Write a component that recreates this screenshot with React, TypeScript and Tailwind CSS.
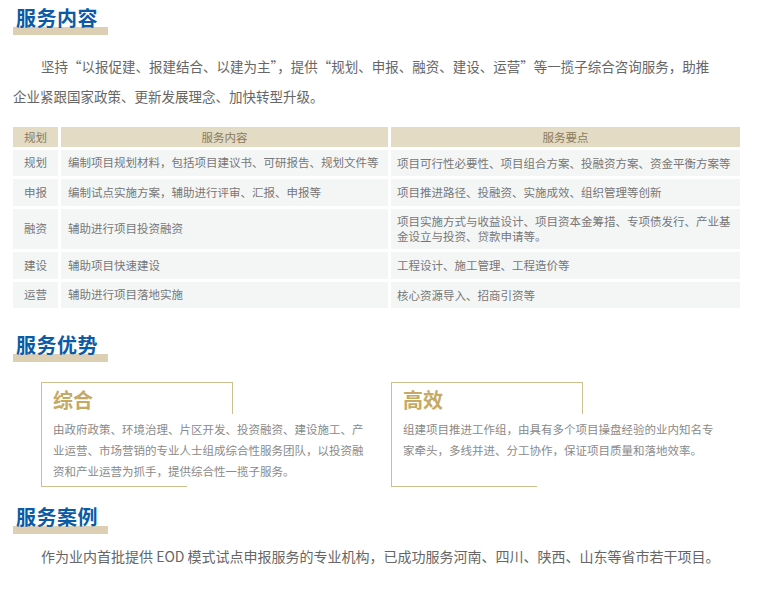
export default function App() {
  const font = { fontFamily: '"Noto Sans CJK SC", "Noto Sans", sans-serif' };
  const H = ({ t }: { t: string }) => (
    <div className="relative ml-[13px] w-[95px] h-[30px]">
      <div className="absolute left-0 right-0 top-[21px] h-[8px] bg-[#dccfb3]" />
      <div className="absolute left-[3px] top-[-3px] text-[20px] leading-[30px] font-bold text-[#0b5aa5] tracking-[0.5px]">{t}</div>
    </div>
  );
  const rows = [
    ["规划", "编制项目规划材料，包括项目建议书、可研报告、规划文件等", "项目可行性必要性、项目组合方案、投融资方案、资金平衡方案等", 26],
    ["申报", "编制试点实施方案，辅助进行评审、汇报、申报等", "项目推进路径、投融资、实施成效、组织管理等创新", 27],
    ["融资", "辅助进行项目投资融资", "项目实施方式与收益设计、项目资本金筹措、专项债发行、产业基金设立与投资、贷款申请等。", 40],
    ["建设", "辅助项目快速建设", "工程设计、施工管理、工程造价等", 27],
    ["运营", "辅助进行项目落地实施", "核心资源导入、招商引资等", 26],
  ] as const;
  const Card = ({ title, text }: { title: string; text: string }) => (
    <div className="relative h-[105px] w-[192px]">
      <div className="absolute left-0 top-0 bottom-0 w-px bg-[#cfbf8f]" />
      <div className="absolute left-0 top-0 right-0 h-px bg-[#cfbf8f]" />
      <div className="absolute right-0 top-0 h-[32px] w-px bg-[#cfbf8f]" />
      <div className="absolute left-0 bottom-0 w-[146px] h-px bg-[#cfbf8f]" />
      <div className="absolute left-[12px] top-[3px] text-[20px] font-bold leading-[30px] text-[#c5a965]">{title}</div>
      <div className="absolute left-[12px] top-[37px] w-[315px] text-[11.5px] leading-[21px] text-[#8a8a8a]">{text}</div>
    </div>
  );
  return (
    <div className="w-[757px] h-[592px] bg-white overflow-hidden pt-[6px]" style={font}>
      <H t="服务内容" />
      <p className="mt-[15px] ml-[13px] w-[700px] text-[13.5px] leading-[30px] text-[#666] indent-[28px]">
        坚持“以报促建、报建结合、以建为主”，提供“规划、申报、融资、建设、运营”等一揽子综合咨询服务，助推企业紧跟国家政策、更新发展理念、加快转型升级。
      </p>
      <div className="mt-[16px] ml-[13px] w-[727px] text-[11.5px] text-[#777]">
        <div className="flex gap-[3px] h-[20px] leading-[20px] text-[#8a7a5a]">
          <div className="w-[45px] bg-[#e3dbc4] text-center">规划</div>
          <div className="w-[327px] bg-[#e3dbc4] text-center">服务内容</div>
          <div className="flex-1 bg-[#e3dbc4] text-center">服务要点</div>
        </div>
        {rows.map((r) => (
          <div key={r[0]} className="flex gap-[3px] mt-[3px]" style={{ height: r[3] as number }}>
            <div className="w-[45px] bg-[#f4f6f6] flex items-center justify-center">{r[0]}</div>
            <div className="w-[327px] bg-[#f4f6f6] flex items-center px-[7px] whitespace-nowrap">{r[1]}</div>
            <div className="flex-1 bg-[#f4f6f6] flex items-center px-[6px] leading-[15px]">{r[2]}</div>
          </div>
        ))}
      </div>
      <div className="mt-[25px]"><H t="服务优势" /></div>
      <div className="flex mt-[19px] ml-[41px] gap-[158px]">
        <Card title="综合" text="由政府政策、环境治理、片区开发、投资融资、建设施工、产业运营、市场营销的专业人士组成综合性服务团队，以投资融资和产业运营为抓手，提供综合性一揽子服务。" />
        <Card title="高效" text="组建项目推进工作组，由具有多个项目操盘经验的业内知名专家牵头，多线并进、分工协作，保证项目质量和落地效率。" />
      </div>
      <div className="mt-[18px]"><H t="服务案例" /></div>
      <p className="mt-[9px] ml-[13px] text-[14px] leading-[24px] text-[#666] indent-[28px]">
        作为业内首批提供 EOD 模式试点申报服务的专业机构，已成功服务河南、四川、陕西、山东等省市若干项目。
      </p>
    </div>
  );
}
